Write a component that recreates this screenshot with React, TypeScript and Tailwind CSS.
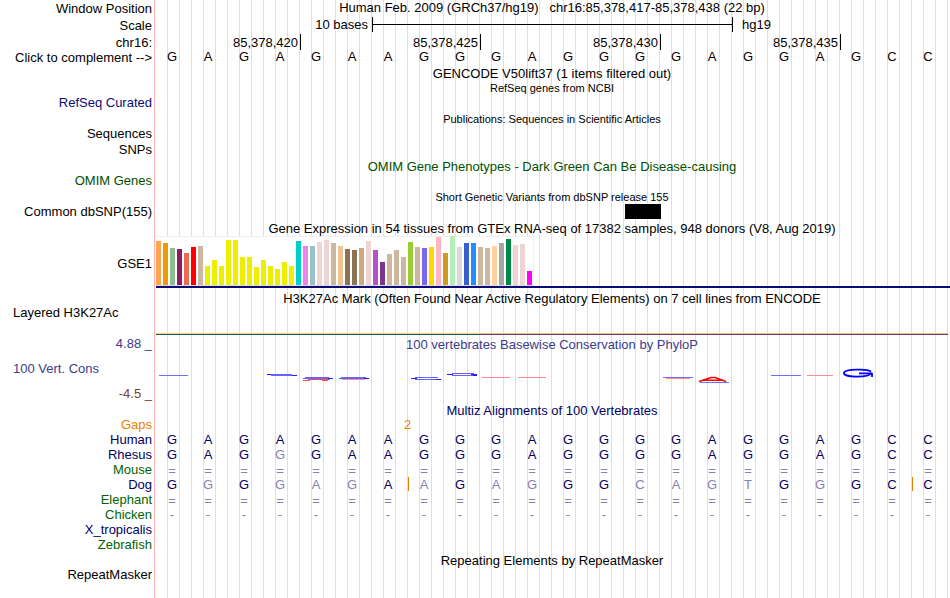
import React, { useState } from 'react';
import clsx from 'clsx';

const HUMAN = 'GAGAGAAGGGAGGGGAGGAGCC';
const COMPLEMENT: Record<string, string> = { A: 'T', T: 'A', G: 'C', C: 'G' };

const POSITIONS = ['85,378,420', '85,378,425', '85,378,430', '85,378,435'];

// lower case = differs from the reference genome, | marks an insertion before the next base
const SPECIES = [
  { name: 'Human', color: 'text-[#000064]', bases: HUMAN },
  { name: 'Rhesus', color: 'text-[#000064]', bases: 'GAGgGAAGGGAGGGGAGGAGCC' },
  { name: 'Mouse', color: 'text-[#006400]', bases: '='.repeat(22) },
  { name: 'Dog', color: 'text-[#000064]', bases: 'GgGgagA|aGagGGcagtGgGC|C' },
  { name: 'Elephant', color: 'text-[#006400]', bases: '='.repeat(22) },
  { name: 'Chicken', color: 'text-[#006400]', bases: '-'.repeat(22) },
  { name: 'X_tropicalis', color: 'text-[#000064]', bases: '' },
  { name: 'Zebrafish', color: 'text-[#006400]', bases: '' },
];

const TISSUES: [string, number][] = [
  ['#ffa54f', 44], ['#ee9a00', 42], ['#8fbc8f', 37], ['#8b1c62', 36], ['#ee6a50', 32], ['#ff0000', 38],
  ['#cdb79e', 39], ['#eeee00', 19], ['#eeee00', 25], ['#eeee00', 19], ['#eeee00', 45], ['#eeee00', 45],
  ['#eeee00', 28], ['#eeee00', 28], ['#eeee00', 18], ['#eeee00', 25], ['#eeee00', 19], ['#eeee00', 16],
  ['#eeee00', 23], ['#eeee00', 19], ['#00cdcd', 44], ['#ee82ee', 39], ['#9ac0cd', 39], ['#eed5d2', 43],
  ['#eed5d2', 45], ['#cdb79e', 42], ['#eec591', 39], ['#8b7355', 36], ['#8b7355', 35], ['#cdaa7d', 37],
  ['#eed5d2', 44], ['#b452cd', 35], ['#7a378b', 23], ['#cdb79e', 31], ['#cdb79e', 35], ['#cdb79e', 28],
  ['#9acd32', 43], ['#cdb79e', 38], ['#7a67ee', 37], ['#ffd700', 38], ['#ffb6c1', 48], ['#cd9b1d', 32],
  ['#b4eeb4', 49], ['#d9d9d9', 38], ['#3a5fcd', 42], ['#1e90ff', 42], ['#cdb79e', 38], ['#cdb79e', 37],
  ['#ffd39b', 39], ['#a6a6a6', 42], ['#008b45', 46], ['#eed5d2', 40], ['#eed5d2', 41], ['#ff00ff', 14],
];

const BASE_GRID = 'grid grid-cols-[repeat(22,minmax(0,1fr))]';

type RowProps = {
  label?: React.ReactNode;
  height: string;
  labelClass?: string;
  children?: React.ReactNode;
};

const Row: React.FC<RowProps> = ({ label, height, labelClass, children }) => (
  <div className={clsx('grid grid-cols-[154px_minmax(0,1fr)]', height)}>
    <div className={clsx('pr-0.5 text-right whitespace-nowrap', labelClass)}>{label}</div>
    <div className="min-w-0">{children}</div>
  </div>
);

const Title: React.FC<{ height: string; className?: string; children: React.ReactNode }> = ({
  height,
  className,
  children,
}) => (
  <Row height={height}>
    <h2 className={clsx('text-center whitespace-pre', className)}>{children}</h2>
  </Row>
);

const Guides = () => (
  <div className="absolute inset-y-0 right-0 left-[154px] grid grid-cols-[repeat(66,minmax(0,1fr))] border-l border-[#ffb0b0] pr-0.5 pl-px">
    {Array.from({ length: 66 }, (_, i) => (
      <div key={i} className="border-r border-[#dcdcf5]" />
    ))}
  </div>
);

const Bases: React.FC<{ bases: string }> = ({ bases }) => {
  const cells: { base: string; insert: boolean }[] = [];
  let insert = false;
  for (const ch of bases) {
    if (ch === '|') {
      insert = true;
      continue;
    }
    cells.push({ base: ch, insert });
    insert = false;
  }

  return (
    <div className={clsx(BASE_GRID, 'pr-1 text-center')}>
      {cells.map(({ base, insert }, i) => (
        <div
          key={i}
          className={clsx(
            'relative',
            /[a-z=-]/.test(base) && 'text-[#8282b4]',
            base === '=' && 'pt-0.5 leading-[13px]'
          )}
        >
          {insert && <span className="absolute top-0 left-0.5 h-3.5 w-px bg-[#e68200]" />}
          {base.toUpperCase()}
        </div>
      ))}
    </div>
  );
};

const Expression = () => (
  <div className="ml-0.5 border-b-2 border-[#0c0c78]">
    <div className="flex h-[50px] w-[378px] items-end gap-0.5 border-t border-b border-r border-t-[#f0f0f0] border-r-[#f0f0f0] border-b-[#dcdcdc] bg-white">
      {TISSUES.map(([color, height], i) => (
        <div key={i} className="w-[5px] shrink-0" style={{ backgroundColor: color, height }} />
      ))}
    </div>
  </div>
);

const Conservation = () => (
  <svg
    className="block h-12 w-full pr-1"
    viewBox="0 0 792 48"
    preserveAspectRatio="none"
    fill="none"
    role="img"
    aria-label="Basewise conservation scores"
  >
    <g stroke="#6e6eff">
      <path d="M5 23.5H34" />
      <path d="M546 30.5H575" />
      <path d="M509 25.5H539M617 23.5H647" />
    </g>
    <g stroke="#6464ff">
      <path d="M113 22.5H138M117 23.5H142" />
      <path d="M151 25.5H175M149 26.5H179" />
      <path d="M187 25.5H212M185 26.5H215" />
      <path d="M261 25.5H284M261 27.5H286" />
      <path d="M298 21.5H320M298 23.5H321" />
    </g>
    <g stroke="#1e1eff">
      <path d="M257 26.5H263M282 27.5H287" />
      <path d="M293 22.5H299M317 22.5H323M319 23.5H323" />
      <path d="M113 22.5H117M138 23.5H143M174 26.5H179M210 26.5H215" />
    </g>
    <g stroke="#ff8c8c">
      <path d="M328 25.5H356M364 25.5H392M653 23.5H679" />
      <path d="M512 26.5H536M188 27.5H211" />
    </g>
    <path stroke="#ff5050" d="M149 28.5H156M154 27.5H176M168 28.5H174" />
    <path stroke="#ff0000" strokeWidth="1.5" d="M545 29.5L557 25.6H561L572 29.5M549 28.3H568" />
    <path
      stroke="#0000ff"
      strokeWidth="1.8"
      d="M717 19.6C714 17 707 17.6 703 17.6C695 17.6 690 19 690 21.2C690 23.4 696 24.6 703 24.6C711 24.6 716 23.4 717 21.4H705M718 21V25"
    />
  </svg>
);

export default function App() {
  const [complement, setComplement] = useState(false);
  const sequence = complement ? HUMAN.replace(/[ACGT]/g, (b) => COMPLEMENT[b]) : HUMAN;

  return (
    <main className="relative min-h-[598px] overflow-hidden bg-white font-['Liberation_Sans',Arial,sans-serif] text-[13px] leading-[15px] text-black">
      <Guides />

      <div className="relative">
        <Row label="Window Position" height="h-[17px]" labelClass="pt-px">
          <h1 className="text-center whitespace-pre">
            Human Feb. 2009 (GRCh37/hg19){'   '}chr16:85,378,417-85,378,438 (22 bp)
          </h1>
        </Row>
        <Row label="Scale" height="h-[17px]" labelClass="pt-px">
          <div className={clsx(BASE_GRID, 'px-0.5')}>
            <span className="col-span-6 pr-1 text-right">10 bases</span>
            <div className="col-span-10 -mr-px flex items-center border-x border-black">
              <div className="h-px w-full bg-black" />
            </div>
            <span className="col-span-6 pl-2.5">hg19</span>
          </div>
        </Row>
        <Row label="chr16:" height="h-[15px]" labelClass="pt-px">
          <div className={clsx(BASE_GRID, 'h-[15px] pr-px pl-[3px] text-right')}>
            {POSITIONS.map((pos, i) => (
              <span
                key={pos}
                className={clsx('border-r border-black pt-px pr-0.5', i === 0 ? 'col-span-4' : 'col-span-5')}
              >
                {pos}
              </span>
            ))}
          </div>
        </Row>
        <Row
          height="h-[17px]"
          labelClass="pt-px"
          label={
            <button type="button" className="block w-full text-right" onClick={() => setComplement(!complement)}>
              Click to complement --&gt;
            </button>
          }
        >
          <Bases bases={sequence} />
        </Row>

        <Title height="h-[15px]">GENCODE V50lift37 (1 items filtered out)</Title>
        <Title height="h-[14px]" className="text-[11px]">RefSeq genes from NCBI</Title>
        <Row label="RefSeq Curated" height="h-[17px]" labelClass="text-[#0c0c78]" />

        <Title height="h-[14px]" className="text-[11px]">Publications: Sequences in Scientific Articles</Title>
        <Row label="Sequences" height="h-[16px]" />
        <Row label="SNPs" height="h-[17px]" />

        <Title height="h-[14px]" className="text-[#005000]">
          OMIM Gene Phenotypes - Dark Green Can Be Disease-causing
        </Title>
        <Row label="OMIM Genes" height="h-[17px]" labelClass="text-[#005000]" />

        <Title height="h-[14px]" className="text-[11px]">Short Genetic Variants from dbSNP release 155</Title>
        <Row label="Common dbSNP(155)" height="h-[17px]">
          <div className={clsx(BASE_GRID, 'pr-px pl-[3px]')}>
            <div className="col-start-14 h-[15px] bg-black" />
          </div>
        </Row>

        <Title height="h-[15px]">
          Gene Expression in 54 tissues from GTEx RNA-seq of 17382 samples, 948 donors (V8, Aug 2019)
        </Title>
        <Row label="GSE1" height="h-[55px]" labelClass="pt-5">
          <Expression />
        </Row>

        <Title height="h-[14px]">
          H3K27Ac Mark (Often Found Near Active Regulatory Elements) on 7 cell lines from ENCODE
        </Title>
        <Row
          height="h-[30px]"
          label={<span className="block pl-[13px] text-left">Layered H3K27Ac</span>}
        >
          <div className={clsx(BASE_GRID, 'h-[30px] items-end px-0.5')}>
            <div className="col-span-9 h-0.5 border-t border-b border-t-[#f0d278] border-b-[#285a5a]" />
            <div className="col-span-13 h-0.5 border-t border-b border-t-[#f0be82] border-b-[#644664]" />
          </div>
        </Row>

        <Row
          height="h-[68px]"
          labelClass="flex flex-col gap-2.5 pt-px text-[#3c3c8c]"
          label={
            <>
              <span>4.88 _</span>
              <span className="pl-[13px] text-left">100 Vert. Cons</span>
              <span className="text-[#783c3c]">-4.5 _</span>
            </>
          }
        >
          <h2 className="pt-0.5 text-center text-[#3c3c8c]">100 vertebrates Basewise Conservation by PhyloP</h2>
          <Conservation />
        </Row>

        <Title height="h-[14px]" className="text-[#000064]">Multiz Alignments of 100 Vertebrates</Title>
        <Row label="Gaps" height="h-[15px]" labelClass="text-[#e68200]">
          <div className={clsx(BASE_GRID, 'pr-1 text-[#e68200]')}>
            <span className="col-start-8 -ml-0.5">2</span>
          </div>
        </Row>
        {SPECIES.map(({ name, color, bases }) => (
          <Row key={name} label={name} height="h-[15px]" labelClass={color}>
            <div className="text-[#000064]">
              <Bases bases={bases} />
            </div>
          </Row>
        ))}

        <Title height="h-[15px]" className="pt-px">Repeating Elements by RepeatMasker</Title>
        <Row label="RepeatMasker" height="h-[31px]" />
      </div>
    </main>
  );
}
